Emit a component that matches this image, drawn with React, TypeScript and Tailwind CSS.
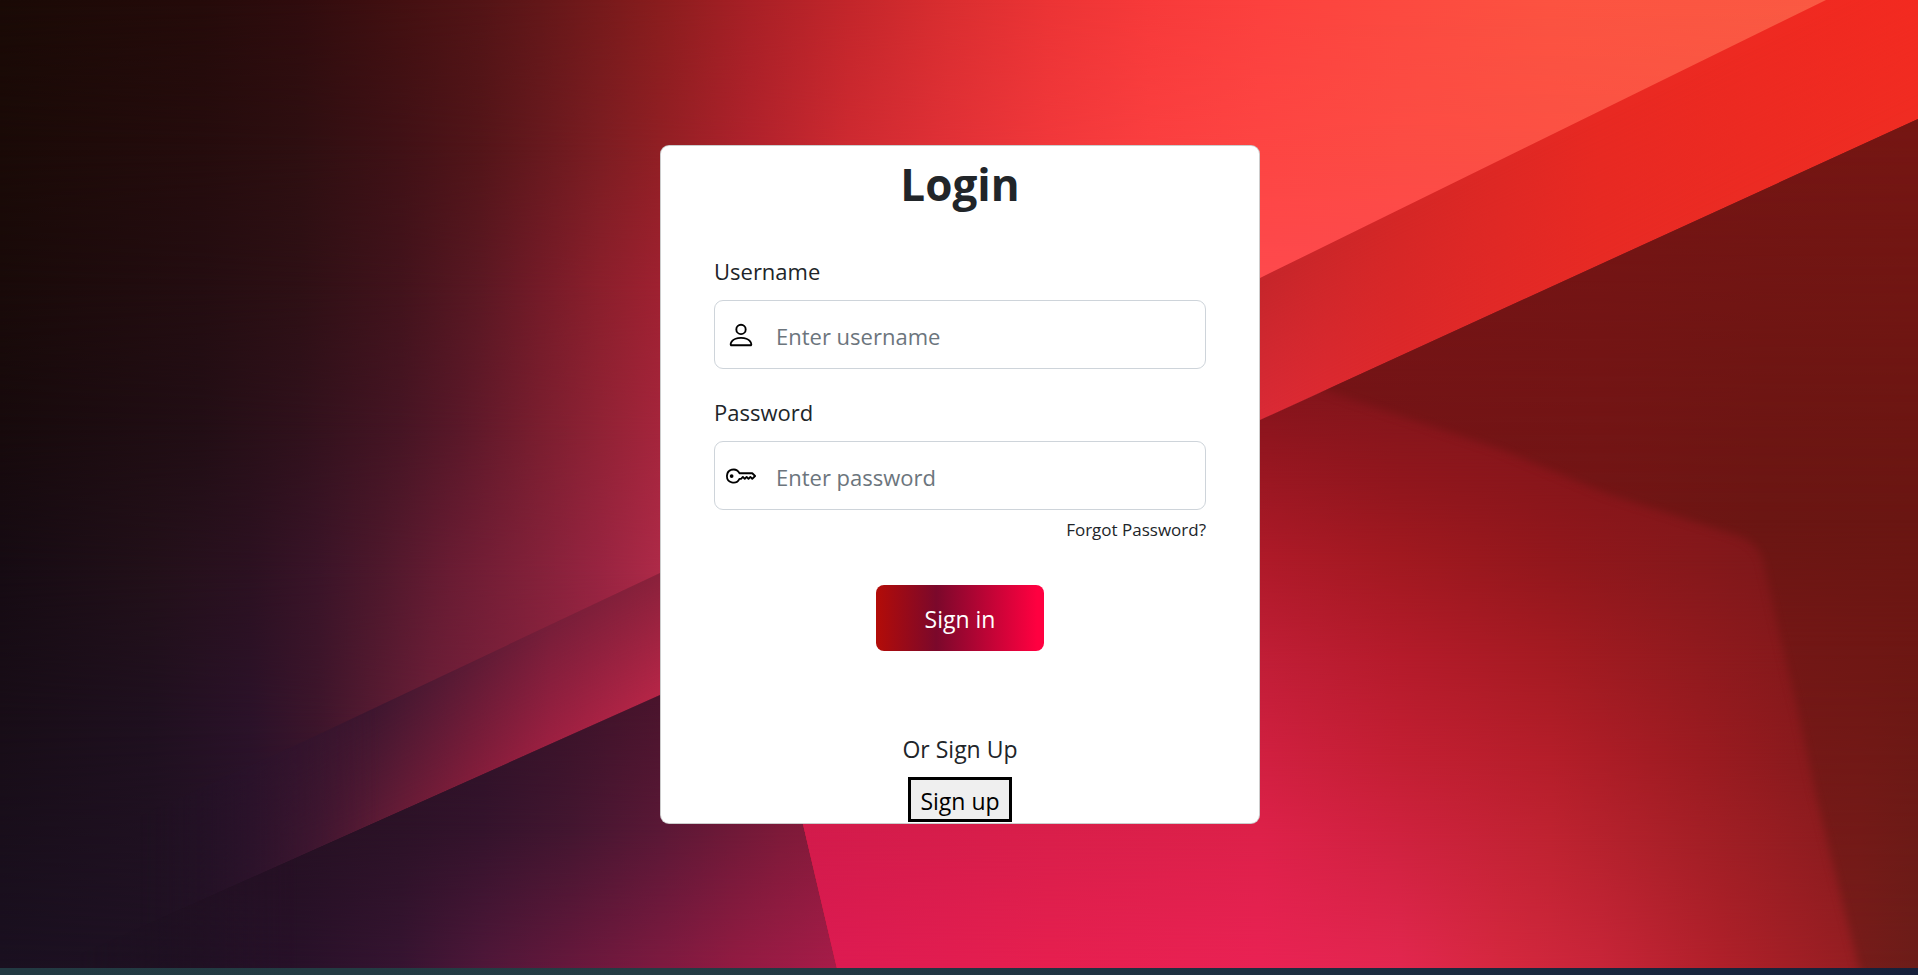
import type { ReactNode } from "react";
import { BsKey, BsPerson } from "react-icons/bs";

type Stop = [x: number, color: string];
type Row = { y: number; stops: Stop[] };

const W = 1918;
const H = 968;

const sky: Row[] = [
  { y: 0, stops: [[0, "#1a0a06"], [200, "#250b0a"], [300, "#300c0e"], [400, "#431011"], [480, "#531416"], [540, "#631719"], [600, "#761a1b"], [660, "#8a1d1e"], [750, "#a82026"], [850, "#c3262b"], [950, "#da2e30"], [1050, "#ec3435"], [1150, "#f73a3a"], [1260, "#fc413e"], [1400, "#fc4a40"], [1550, "#fc5341"], [1830, "#fa5a43"]] },
  { y: 150, stops: [[0, "#1a0a07"], [200, "#250c0d"], [300, "#2e0f11"], [400, "#401116"], [480, "#531519"], [540, "#67191e"], [600, "#7c1d22"], [660, "#911f24"], [750, "#b0222c"], [850, "#ce2a31"], [950, "#e13137"], [1050, "#f1383b"], [1150, "#fa3f40"], [1260, "#fd4543"], [1400, "#fc4c44"], [1550, "#fb5144"], [1830, "#fa5a43"]] },
  { y: 290, stops: [[0, "#190a09"], [200, "#240d11"], [300, "#2e1015"], [400, "#42131c"], [480, "#5b1823"], [540, "#741b28"], [600, "#8b1f2c"], [660, "#9f2131"], [900, "#d83040"], [1260, "#fe4a4e"], [1830, "#fe4a4e"]] },
  { y: 430, stops: [[0, "#170a0c"], [200, "#220e15"], [300, "#30111c"], [400, "#461524"], [460, "#5a1829"], [540, "#7a1e2f"], [600, "#902235"], [660, "#a5253c"], [1260, "#f04050"]] },
  { y: 570, stops: [[0, "#160b13"], [150, "#221019"], [250, "#2c1121"], [317, "#3a1428"], [383, "#4f182c"], [450, "#691c33"], [540, "#84213a"], [600, "#982441"], [660, "#ae2a48"], [1260, "#d03050"]] },
  { y: 720, stops: [[0, "#180d17"], [150, "#1f101f"], [250, "#2b1229"], [317, "#3d152b"], [370, "#541a31"], [430, "#6c1e38"], [660, "#a52546"]] },
  { y: 968, stops: [[0, "#1a1020"], [200, "#211224"], [300, "#2c1430"], [660, "#40152f"]] },
];

/* Drawn in sheared coordinates: y = 0 follows the band's upper edge. */
const band: Row[] = [
  { y: 0, stops: [[0, "#1a1020"], [200, "#24122a"], [300, "#31142e"], [370, "#3c162f"], [450, "#551a34"], [550, "#751e39"], [660, "#88213b"], [900, "#a82334"], [1260, "#c6262b"], [1400, "#d52726"], [1600, "#e82922"], [1918, "#f42a20"]] },
  { y: 138, stops: [[0, "#1a1020"], [200, "#27122a"], [250, "#32142c"], [317, "#471832"], [400, "#6a1c37"], [470, "#851d3b"], [550, "#a02042"], [660, "#ba2648"], [1260, "#da2a36"], [1400, "#dc282a"], [1600, "#e72a24"], [1918, "#f02c22"]] },
];

const shade: Row[] = [
  { y: 690, stops: [[0, "#1b0f1c"], [270, "#261122"], [400, "#291124"], [480, "#2d1226"], [560, "#381228"], [660, "#49142c"], [840, "#5c1532"]] },
  { y: 830, stops: [[0, "#1b0f1d"], [270, "#241022"], [400, "#2c1227"], [483, "#34132c"], [570, "#431630"], [660, "#5a1836"], [780, "#7d1a39"], [840, "#881b3c"]] },
  { y: 968, stops: [[0, "#1a1020"], [150, "#1c0f20"], [300, "#281129"], [400, "#361431"], [483, "#4f1739"], [567, "#66183c"], [660, "#7e1a40"], [734, "#921b42"], [840, "#a81c49"]] },
];

const floor: Row[] = [
  { y: 400, stops: [[800, "#901828"], [1260, "#87141c"], [1400, "#84161b"], [1700, "#80171b"], [1918, "#761716"]] },
  { y: 480, stops: [[800, "#a01a30"], [1260, "#9b1722"], [1400, "#90161d"], [1600, "#86161a"], [1700, "#82171a"], [1918, "#761716"]] },
  { y: 560, stops: [[800, "#b01c3a"], [1260, "#af1a29"], [1400, "#a11920"], [1550, "#92171c"], [1700, "#85181b"], [1770, "#7e181a"], [1918, "#741816"]] },
  { y: 660, stops: [[800, "#c01c42"], [1260, "#c11e37"], [1400, "#b51b2b"], [1550, "#a51b22"], [1700, "#911a1e"], [1800, "#84191b"], [1918, "#781916"]] },
  { y: 760, stops: [[800, "#cc1c48"], [1260, "#d12041"], [1400, "#c31f33"], [1550, "#b51e2a"], [1700, "#9c1b21"], [1800, "#8a1a1d"], [1918, "#7f1b18"]] },
  { y: 840, stops: [[800, "#d31b4c"], [1050, "#da1f4b"], [1260, "#de214a"], [1400, "#cf223f"], [1550, "#bf2331"], [1700, "#a41f26"], [1830, "#8d1c1f"], [1918, "#801c19"]] },
  { y: 968, stops: [[800, "#dc1a52"], [1050, "#e61f4f"], [1260, "#e92254"], [1400, "#e2274f"], [1500, "#d5283f"], [1600, "#c82539"], [1720, "#b0202a"], [1850, "#961e22"], [1918, "#861d1a"]] },
];

const corner: Row[] = [
  { y: 120, stops: [[1325, "#741315"], [1918, "#761613"]] },
  { y: 520, stops: [[1325, "#751417"], [1600, "#721515"], [1760, "#6b1613"], [1918, "#6a1612"]] },
  { y: 640, stops: [[1325, "#751417"], [1770, "#741716"], [1918, "#6d1713"]] },
  { y: 968, stops: [[1700, "#7a1b1b"], [1860, "#761c1a"], [1918, "#6c1d19"]] },
];

function Mesh({ id, rows }: { id: string; rows: Row[] }) {
  return (
    <>
      {rows.map((row, i) => {
        const prev = rows[i - 1];
        const key = `${id}-${i}`;
        return (
          <g key={key}>
            <linearGradient id={`${key}-fill`} gradientUnits="userSpaceOnUse" x1="0" y1="0" x2={W} y2="0">
              {row.stops.map(([x, color]) => (
                <stop key={x} offset={x / W} stopColor={color} />
              ))}
            </linearGradient>
            {prev && (
              <>
                <linearGradient id={`${key}-fade`} gradientUnits="userSpaceOnUse" x1="0" y1={prev.y} x2="0" y2={row.y}>
                  <stop offset="0" stopColor="#fff" stopOpacity="0" />
                  <stop offset="1" stopColor="#fff" />
                </linearGradient>
                <mask id={`${key}-mask`} maskUnits="userSpaceOnUse" x="0" y={prev.y} width={W} height="3000">
                  <rect x="0" y={prev.y} width={W} height="3000" fill={`url(#${key}-fade)`} />
                </mask>
              </>
            )}
            <rect
              x="0"
              y={prev ? prev.y : -100}
              width={W}
              height="3000"
              fill={`url(#${key}-fill)`}
              mask={prev ? `url(#${key}-mask)` : undefined}
            />
          </g>
        );
      })}
    </>
  );
}

function Backdrop() {
  return (
    <svg
      className="absolute inset-0 -z-10 h-full w-full"
      viewBox={`0 0 ${W} ${H}`}
      preserveAspectRatio="none"
      aria-hidden="true"
    >
      <defs>
        <clipPath id="band-clip">
          <path d="M1930 -50 L1826 0 L1260 278 L660 573 L311 738 L0 880 V990 L269 870 L660 695 L1260 420 L1918 119 L1930 -50Z" />
        </clipPath>
        <clipPath id="shade-clip">
          <path d="M0 990 L269 870 L660 695 L772 644 L837 968 V990Z" />
        </clipPath>
        <clipPath id="floor-clip">
          <path d="M760 649 L1260 420 L1918 119 V990 H842 L803 824Z" />
        </clipPath>
        <linearGradient id="band-fade" gradientUnits="userSpaceOnUse" x1="140" y1="0" x2="380" y2="0">
          <stop offset="0" stopColor="#fff" stopOpacity="0" />
          <stop offset="1" stopColor="#fff" />
        </linearGradient>
        <mask id="band-mask" maskUnits="userSpaceOnUse" x="0" y="0" width={W} height={H}>
          <rect width={W} height={H} fill="url(#band-fade)" />
        </mask>
        <linearGradient id="shade-fade" gradientUnits="userSpaceOnUse" x1="80" y1="0" x2="300" y2="0">
          <stop offset="0" stopColor="#fff" stopOpacity="0" />
          <stop offset="1" stopColor="#fff" />
        </linearGradient>
        <mask id="shade-mask" maskUnits="userSpaceOnUse" x="0" y="0" width={W} height={H}>
          <rect width={W} height={H} fill="url(#shade-fade)" />
        </mask>
        <filter id="soft" x="-5%" y="-5%" width="110%" height="110%">
          <feGaussianBlur stdDeviation="4" />
        </filter>
        <mask id="corner-mask" maskUnits="userSpaceOnUse" x="0" y="0" width={W} height={H}>
          <path
            d="M1318 388 L1500 449 L1608 494 L1730 533 Q1758 541 1763 560 L1779 632 L1798 711 L1815 791 L1831 856 L1855 951 L1870 1010 H2000 V0 H1318Z"
            fill="#fff"
            filter="url(#soft)"
          />
        </mask>
      </defs>
      <Mesh id="sky" rows={sky} />
      <g mask="url(#band-mask)">
        <g clipPath="url(#band-clip)">
          <g transform="matrix(1 -0.475 0 1 0 880)">
            <Mesh id="band" rows={band} />
          </g>
        </g>
      </g>
      <g mask="url(#shade-mask)">
        <g clipPath="url(#shade-clip)">
          <Mesh id="shade" rows={shade} />
        </g>
      </g>
      <g clipPath="url(#floor-clip)">
        <Mesh id="floor" rows={floor} />
        <g mask="url(#corner-mask)">
          <Mesh id="corner" rows={corner} />
        </g>
      </g>
    </svg>
  );
}

type FieldProps = {
  id: string;
  label: string;
  type: string;
  placeholder: string;
  icon: ReactNode;
};

function Field({ id, label, type, placeholder, icon }: FieldProps) {
  return (
    <div className="flex flex-col gap-3">
      <label htmlFor={id} className="text-[22px] leading-[34px]">
        {label}
      </label>
      <div className="relative">
        <span className="pointer-events-none absolute left-3 top-5 text-[30px] text-black">{icon}</span>
        <input
          id={id}
          type={type}
          placeholder={placeholder}
          className="block h-[69px] w-full rounded-[9px] border border-[#ced4da] bg-white pt-1 pl-[61px] pr-4 text-[22px] placeholder:text-[#6c757d]"
        />
      </div>
    </div>
  );
}

export default function App() {
  return (
    <div className="flex min-h-screen flex-col font-['Open_Sans','Noto_Sans',sans-serif] text-[#212529]">
      <main className="relative isolate flex flex-1 items-center justify-center overflow-hidden pl-0.5">
        <Backdrop />
        <form
          className="flex w-full max-w-[600px] flex-col rounded-[9px] border border-black/20 bg-white px-[53px] pt-2 pb-px"
          onSubmit={(event) => event.preventDefault()}
        >
          <h1 className="mb-10 text-center text-[44px] leading-[60px] font-bold">Login</h1>
          <div className="flex flex-col gap-[26px]">
            <Field id="username" label="Username" type="text" placeholder="Enter username" icon={<BsPerson />} />
            <Field id="password" label="Password" type="password" placeholder="Enter password" icon={<BsKey />} />
          </div>
          <a href="#forgot" className="mt-2 self-end text-[17px] leading-6">
            Forgot Password?
          </a>
          <button
            type="submit"
            className="mt-[43px] h-[66px] w-[168px] self-center rounded-lg bg-[linear-gradient(90deg,#b30c08_0%,#7b082b_36%,#ff0040_96%)] pt-1 text-[23px] text-white"
          >
            Sign in
          </button>
          <p className="mt-20 mb-[10px] text-center text-[23px] leading-9">Or Sign Up</p>
          <button
            type="button"
            className="h-[45px] w-[104px] self-center border-3 border-black bg-[#efefef] pt-1 text-[23px] leading-8 text-black"
          >
            Sign up
          </button>
        </form>
      </main>
      <footer className="h-[7px] bg-[linear-gradient(90deg,#223a42_0%,#243c44_35%,#1d2f40_65%,#16203a_100%)]" />
    </div>
  );
}
